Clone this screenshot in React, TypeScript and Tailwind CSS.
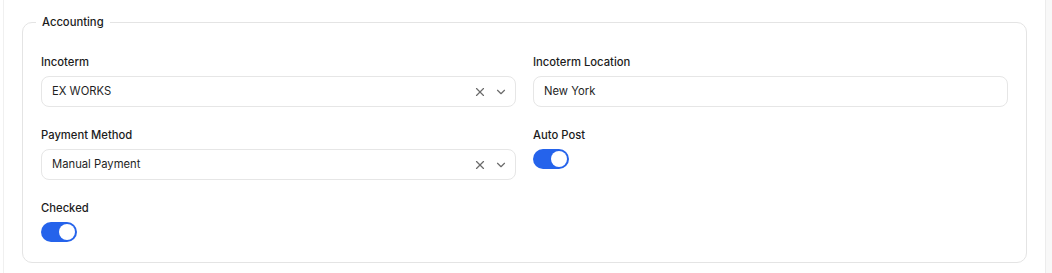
import { ChevronDown, X } from "lucide-react";

type Field =
  | { kind: "select"; label: string; value: string }
  | { kind: "text"; label: string; value: string }
  | { kind: "toggle"; label: string; on: boolean };

const fields: Field[] = [
  { kind: "select", label: "Incoterm", value: "EX WORKS" },
  { kind: "text", label: "Incoterm Location", value: "New York" },
  { kind: "select", label: "Payment Method", value: "Manual Payment" },
  { kind: "toggle", label: "Auto Post", on: true },
  { kind: "toggle", label: "Checked", on: true },
];

const Toggle = ({ on }: { on: boolean }) => (
  <button
    className={`flex h-5 w-9 items-center rounded-full p-[2px] ${
      on ? "justify-end bg-[#2563eb]" : "justify-start bg-gray-300"
    }`}
  >
    <span className="h-4 w-4 rounded-full bg-white" />
  </button>
);

const FieldItem = ({ field }: { field: Field }) => {
  return (
    <div className="flex flex-col gap-[6px]">
      <label className="text-[11.25px] leading-4 font-medium text-[#1c1c1c]">{field.label}</label>
      {field.kind === "select" && (
        <div className="flex h-[31px] items-center rounded-lg border border-[#e6e6e6] bg-white pl-[10px] pr-[7px]">
          <span className="flex-1 text-[11.25px] text-[#1f1f1f]">{field.value}</span>
          <X className="h-[14px] w-[14px] text-[#6b6b6b]" strokeWidth={2} />
          <ChevronDown className="ml-[7px] h-[14px] w-[14px] text-[#6b6b6b]" strokeWidth={2} />
        </div>
      )}
      {field.kind === "text" && (
        <div className="flex h-[31px] items-center rounded-lg border border-[#e6e6e6] bg-white px-[10px]">
          <span className="text-[11.25px] text-[#1f1f1f]">{field.value}</span>
        </div>
      )}
      {field.kind === "toggle" && <Toggle on={field.on} />}
    </div>
  );
};

const App = () => {
  return (
    <div
      className="flex h-[273px] w-full bg-white"
      style={{ fontFamily: "Inter, 'Noto Sans', sans-serif" }}
    >
      <div className="w-[3px]" />
      <main className="flex-1 border-l border-[#f0f0f0] pl-[18px] pr-[18px] pt-[14px]">
        <fieldset className="rounded-[10px] border border-[#e4e4e4] px-[18px] pb-[20px] pt-[24px]">
          <legend className="ml-[-5px] px-1.5 text-[11.25px] leading-4 font-medium text-[#1c1c1c]">
            Accounting
          </legend>
          <div className="grid grid-cols-2 gap-x-[17px] gap-y-5">
            {fields.map((field, idx) => (
              <FieldItem key={`${idx}-${field.label}`} field={field} />
            ))}
          </div>
        </fieldset>
      </main>
      <div className="w-[7px] border-l border-[#ececec] bg-[#f8f8f8]" />
    </div>
  );
};

export default App;
